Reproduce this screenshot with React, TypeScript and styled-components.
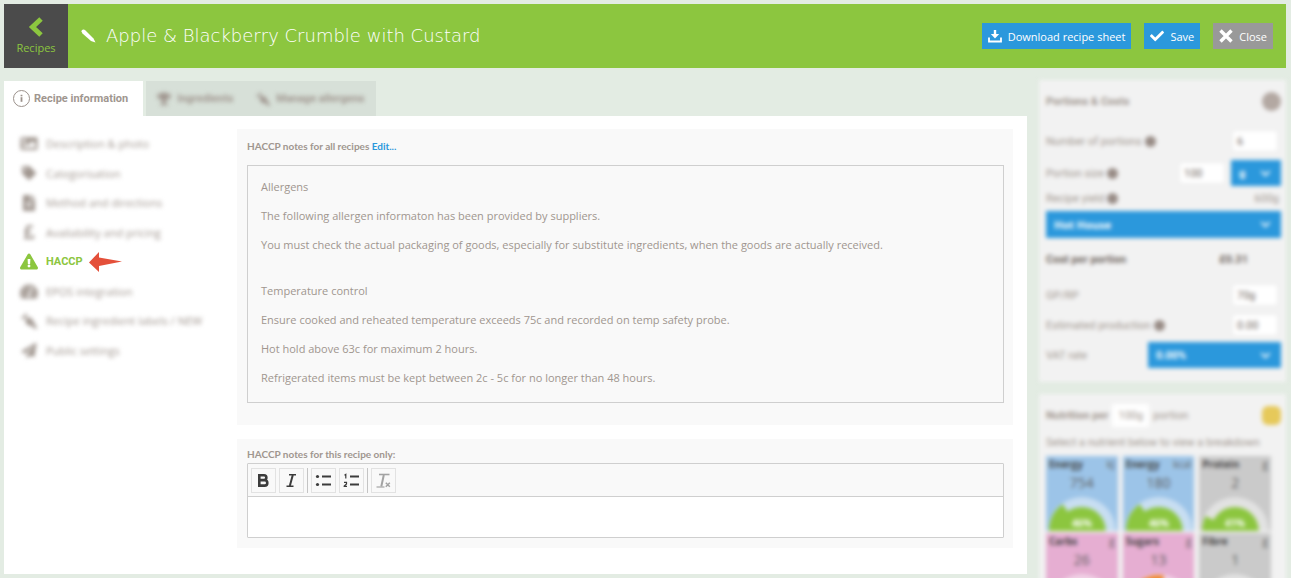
import React from 'react';
import styled, { createGlobalStyle, css } from 'styled-components';
import {
  FaCarrot,
  FaCheck,
  FaChevronDown,
  FaExclamationTriangle,
  FaFileAlt,
  FaImage,
  FaPaperPlane,
  FaPoundSign,
  FaTachometerAlt,
  FaTag,
  FaTrophy,
} from 'react-icons/fa';

const color = {
  page: '#e3ece3',
  green: '#8cc63f',
  dark: '#4b4b4b',
  blue: '#2b98dc',
  grey: '#999999',
  text: '#a0968f',
  card: '#f9f9f9',
  side: '#f2f2f2',
  line: '#cfcfcf',
};

const GlobalStyle = createGlobalStyle`
  *, *::before, *::after { box-sizing: border-box; }
  body {
    margin: 0;
    background: ${color.page};
    color: ${color.text};
    font-family: 'Open Sans', 'Liberation Sans', sans-serif;
    font-size: 11px;
    line-height: 17px;
  }
  button, input, select, textarea { font: inherit; color: inherit; margin: 0; }
  p, h1, h2, ul { margin: 0; padding: 0; font: inherit; }
`;

const Page = styled.div`
  display: flex;
  flex-direction: column;
  gap: 12px;
  height: 100vh;
  padding: 4px 5px 4px 4px;
  overflow: hidden;
`;

const Header = styled.header`
  display: flex;
  align-items: center;
  flex: none;
  height: 64px;
  background: ${color.green};
`;

const BackLink = styled.a`
  display: flex;
  flex-direction: column;
  align-items: center;
  justify-content: center;
  gap: 2px;
  width: 64px;
  height: 64px;
  background: ${color.dark};
  color: ${color.green};
  text-decoration: none;
`;

const Title = styled.h1`
  display: flex;
  align-items: center;
  gap: 10px;
  flex: 1;
  padding-left: 13px;
  color: #fff;
  font-family: 'DejaVu Sans', sans-serif;
  font-size: 18px;
  font-weight: 200;
  line-height: 24px;
  white-space: nowrap;
`;

const Actions = styled.div`
  display: flex;
  gap: 13px;
  padding-right: 13px;
`;

const ActionButton = styled.button<{ $muted?: boolean }>`
  display: flex;
  align-items: center;
  gap: 6px;
  height: 26px;
  padding: 0 6px;
  border: 0;
  background: ${(p) => (p.$muted ? color.grey : color.blue)};
  color: #fff;
  white-space: nowrap;
`;

const Columns = styled.div`
  display: flex;
  gap: 12px;
  flex: 1;
  min-height: 0;
`;

const Main = styled.main`
  display: flex;
  flex-direction: column;
  flex: 1;
  min-width: 0;
`;

const blurred = css`
  filter: blur(2px);
`;

const Tabs = styled.div`
  display: flex;
  height: 36px;
  padding-top: 1px;
`;

const Tab = styled.button<{ $active?: boolean }>`
  display: flex;
  align-items: center;
  gap: 4px;
  height: 35px;
  padding: ${(p) => (p.$active ? '0 15px 0 9px' : '0 12px 0 11px')};
  margin-right: ${(p) => (p.$active ? '3px' : '0')};
  border: 0;
  background: ${(p) => (p.$active ? '#fff' : '#d7e0d8')};
  font-family: Roboto, sans-serif;
  font-weight: bold;
  white-space: nowrap;
`;

const TabContent = styled.span`
  display: flex;
  align-items: center;
  gap: 6px;
  ${blurred}
`;

const Panel = styled.section`
  display: flex;
  align-items: flex-start;
  flex: 1;
  padding: 13px 14px 13px 0;
  background: #fff;
`;

const Menu = styled.ul`
  display: flex;
  flex-direction: column;
  flex: none;
  width: 233px;
  height: 236px;
  padding-left: 16px;
  list-style: none;
`;

const MenuItem = styled.li`
  display: flex;
  align-items: center;
  gap: 6px;
  flex: 1;
`;

const MenuLink = styled.a<{ $active?: boolean }>`
  display: flex;
  align-items: center;
  gap: 8px;
  color: ${(p) => (p.$active ? color.green : color.text)};
  font-family: ${(p) => (p.$active ? 'Roboto, sans-serif' : 'inherit')};
  font-weight: ${(p) => (p.$active ? 'bold' : 'normal')};
  text-decoration: none;
  white-space: nowrap;
  ${(p) => !p.$active && blurred}
  svg { width: 18px; }
`;

const Notes = styled.div`
  display: flex;
  flex-direction: column;
  gap: 14px;
  flex: 1;
  min-width: 0;
`;

const NoteCard = styled.section<{ $compact?: boolean }>`
  padding: ${(p) => (p.$compact ? '8px 9px 10px 10px' : '10px 9px 22px 10px')};
  background: ${color.card};
`;

const NoteLabel = styled.label<{ $gap: number }>`
  display: block;
  margin-bottom: ${(p) => p.$gap}px;
  font-family: Lato, sans-serif;
  font-size: 10px;
  font-weight: bold;
  line-height: 14px;
`;

const EditLink = styled.a`
  color: ${color.blue};
  text-decoration: none;
`;

const NoteBody = styled.div`
  display: flex;
  flex-direction: column;
  gap: 12px;
  padding: 12px 13px 16px;
  border: 1px solid ${color.line};
`;

const NoteGroup = styled.div`
  display: flex;
  flex-direction: column;
  gap: 12px;
  & + & { margin-top: 17px; }
`;

const Editor = styled.div`
  border: 1px solid ${color.line};
  border-radius: 1px;
`;

const Toolbar = styled.div`
  display: flex;
  align-items: center;
  gap: 3px;
  height: 33px;
  padding: 0 3px;
  border-bottom: 1px solid ${color.line};
`;

const ToolButton = styled.button`
  display: flex;
  align-items: center;
  justify-content: center;
  width: 25px;
  height: 25px;
  padding: 0;
  border: 1px solid #e2e2e2;
  background: ${color.card};
  color: #3c3c3c;
`;

const Divider = styled.span`
  width: 1px;
  height: 25px;
  background: #c4c4c4;
`;

const TextArea = styled.textarea`
  display: block;
  width: 100%;
  height: 40px;
  padding: 8px;
  border: 0;
  outline: 0;
  background: #fff;
  resize: none;
`;

const Sidebar = styled.aside`
  display: flex;
  flex-direction: column;
  gap: 12px;
  flex: none;
  width: 247px;
  ${blurred}
`;

const SideCard = styled.section`
  flex: none;
  padding: 0 5px 12px 7px;
  background: ${color.side};
`;

const SideTitle = styled.h2`
  display: flex;
  align-items: center;
  gap: 4px;
  height: 42px;
  font-family: Roboto, sans-serif;
  font-weight: bold;
`;

const Round = styled.span<{ $tone?: string }>`
  width: 19px;
  height: 19px;
  margin-left: auto;
  border-radius: ${(p) => (p.$tone ? '6px' : '50%')};
  background: ${(p) => p.$tone ?? '#b3a8a2'};
`;

const Row = styled.div<{ $height: number; $strong?: boolean }>`
  display: flex;
  align-items: center;
  gap: 6px;
  height: ${(p) => p.$height}px;
  font-family: Roboto, sans-serif;
  font-weight: ${(p) => (p.$strong ? 'bold' : 'normal')};
  color: ${(p) => (p.$strong ? '#6f6660' : color.text)};
`;

const RowLabel = styled.label`
  display: flex;
  align-items: center;
  gap: 3px;
  flex: 1;
  white-space: nowrap;
`;

const Help = styled.i`
  width: 11px;
  height: 11px;
  border-radius: 50%;
  background: #988c86;
`;

const Field = styled.input`
  width: 46px;
  height: 22px;
  padding: 0 4px;
  border: 1px solid #ececec;
  background: #fff;
  color: #6f6660;
`;

const FieldEnd = styled.div`
  padding-right: 3px;
`;

const SelectBox = styled.div<{ $width: string; $height: number }>`
  display: grid;
  align-items: center;
  width: ${(p) => p.$width};
  height: ${(p) => p.$height}px;
  background: ${color.blue};
  color: #fff;
  font-weight: bold;
  > * { grid-area: 1 / 1; }
  > svg { justify-self: end; margin-right: 10px; pointer-events: none; }
`;

const Select = styled.select`
  width: 100%;
  height: 100%;
  padding: 0 8px;
  border: 0;
  background: transparent;
  appearance: none;
`;

const RowValue = styled.span<{ $inset?: boolean }>`
  padding-right: ${(p) => (p.$inset ? '33px' : '2px')};
`;

const Portion = styled.span`
  padding: 3px 6px;
  background: #fff;
  font-weight: normal;
`;

const Light = styled.span`
  font-weight: normal;
`;

const Hint = styled.p`
  height: 20px;
  font-family: Roboto, sans-serif;
  line-height: 14px;
  white-space: nowrap;
`;

const Tiles = styled.div`
  display: grid;
  grid-template-columns: repeat(3, 1fr);
  gap: 2px 5px;
  padding-right: 10px;
`;

const Tile = styled.div<{ $tone: string }>`
  display: flex;
  flex-direction: column;
  height: 75px;
  background: ${(p) => p.$tone};
  color: #5c5c5c;
`;

const TileHead = styled.div`
  display: flex;
  justify-content: space-between;
  padding: 0 3px;
  font-size: 10px;
  b { color: #444; }
`;

const TileValue = styled.span`
  margin-bottom: auto;
  font-size: 14px;
  line-height: 20px;
  text-align: center;
`;

const ChevronIcon = () => (
  <svg width="16" height="20" viewBox="0 0 16 20" fill="none" stroke="currentColor" strokeWidth="5">
    <path d="M13 2 L4.500 10 L13 18" />
  </svg>
);

const PencilIcon = () => (
  <svg width="15" height="14" viewBox="0 0 15 14" fill="#fff">
    <path d="M0.500 2.500 Q0.300 0.300 3 0.500 L4.500 1.500 L12.500 9.500 L14.500 13.500 L10 12 L1.500 4.500 Z" />
  </svg>
);

const DownloadIcon = () => (
  <svg width="14" height="14" viewBox="0 0 14 14" fill="none" stroke="currentColor">
    <path d="M7 1v5" strokeWidth="2.400" />
    <path d="M2.800 5h8.400L7 9.600z" fill="currentColor" stroke="none" />
    <path d="M1 8.500V12.500H13V8.500" strokeWidth="1.800" />
  </svg>
);

const CrossIcon = () => (
  <svg width="14" height="14" viewBox="0 0 14 14" stroke="currentColor" strokeWidth="3.400">
    <path d="M1.500 1.500 L12.500 12.500 M12.500 1.500 L1.500 12.500" />
  </svg>
);

const InfoIcon = () => (
  <svg width="17" height="17" viewBox="0 0 17 17" fill="none" stroke="#9b918b">
    <circle cx="8.500" cy="8.500" r="8" />
    <path d="M8.500 7.200v4.600" strokeWidth="1.800" />
    <path d="M8.500 4.800v1.500" strokeWidth="1.800" />
  </svg>
);

const ArrowIcon = () => (
  <svg width="33" height="20" viewBox="0 0 33 20" fill="#e4503a">
    <path d="M0 10.500 L10 0 V5.500 L33 9.500 L10 14 V20 Z" />
  </svg>
);

const BoldIcon = () => (
  <svg width="17" height="17" viewBox="0 0 17 17" fill="none" stroke="currentColor" strokeWidth="2.600">
    <path d="M4.500 3.300H9a2.300 2.300 0 0 1 0 4.700H4.500M4.500 8.200H9.600a2.700 2.700 0 0 1 0 5.400H4.500M4.300 2v12.900" />
  </svg>
);

const ItalicIcon = () => (
  <svg width="17" height="17" viewBox="0 0 17 17" fill="none" stroke="currentColor" strokeWidth="1.400">
    <path d="M6 2.700h7M3.500 14.300h7" />
    <path d="M9.800 3L6.800 14" strokeWidth="2" />
  </svg>
);

const ListIcon = ({ numbered }: { numbered?: boolean }) => (
  <svg width="17" height="17" viewBox="0 0 17 17" fill="none" stroke="currentColor">
    <path d="M7 4.500h9M7 12.500h9" strokeWidth="1.800" />
    {numbered ? (
      <path d="M1.500 3.200L2.800 2.300V6.600M1 10.300h2.500v1.600L1.200 14v0.400h2.800" strokeWidth="1.200" />
    ) : (
      <g fill="currentColor" stroke="none">
        <circle cx="2.500" cy="4.500" r="1.600" />
        <circle cx="2.500" cy="12.500" r="1.600" />
      </g>
    )}
  </svg>
);

const ClearIcon = () => (
  <svg width="17" height="17" viewBox="0 0 17 17" fill="none" stroke="#a3a3a3">
    <path d="M4 2.500h10.500" strokeWidth="1.600" />
    <path d="M8.800 3L6.300 14.500" strokeWidth="2" />
    <path d="M1.500 15h8" strokeWidth="1.200" />
    <path d="M10.800 10.800l4 4M14.800 10.800l-4 4" strokeWidth="1.500" />
  </svg>
);

const AllergenIcon = styled(FaCarrot)`
  transform: scaleX(-1);
`;

const Gauge = ({ label, fill, tone }: { label?: string; fill: number; tone: string }) => {
  const angle = Math.PI * (1 - fill);
  const x = 36 + 33 * Math.cos(angle);
  const y = 35 - 33 * Math.sin(angle);
  return (
    <svg width="100%" height="35" viewBox="0 0 72 35">
      <path d="M2 35a34 34 0 0 1 68 0z" fill="#fff" fillOpacity="0.450" />
      <path d={`M36 35H3A33 33 0 0 1 ${x} ${y}z`} fill={tone} />
      <path d="M12 35a24 24 0 0 1 48 0z" fill={tone} />
      {label && (
        <text x="36" y="31" fill="#fff" fontSize="10" fontWeight="bold" textAnchor="middle">
          {label}
        </text>
      )}
    </svg>
  );
};

const menu = [
  { label: 'Description & photo', icon: <FaImage size={17} /> },
  { label: 'Categorisation', icon: <FaTag size={14} /> },
  { label: 'Method and directions', icon: <FaFileAlt size={16} /> },
  { label: 'Availability and pricing', icon: <FaPoundSign size={16} /> },
  { label: 'HACCP', icon: <FaExclamationTriangle size={17} />, active: true },
  { label: 'EPOS integration', icon: <FaTachometerAlt size={17} /> },
  { label: 'Recipe ingredient labels / NEW', icon: <AllergenIcon size={16} /> },
  { label: 'Public settings', icon: <FaPaperPlane size={15} /> },
];

const sharedNotes = [
  [
    'Allergens',
    'The following allergen informaton has been provided by suppliers.',
    'You must check the actual packaging of goods, especially for substitute ingredients, when the goods are actually received.',
  ],
  [
    'Temperature control',
    'Ensure cooked and reheated temperature exceeds 75c and recorded on temp safety probe.',
    'Hot hold above 63c for maximum 2 hours.',
    'Refrigerated items must be kept between 2c - 5c for no longer than 48 hours.',
  ],
];

const tiles = [
  { name: 'Energy', unit: 'kJ', value: '754', label: '46%', fill: 0.3, tone: '#9cc4e8', gauge: color.green },
  { name: 'Energy', unit: 'kcal', value: '180', label: '46%', fill: 0.3, tone: '#9cc4e8', gauge: color.green },
  { name: 'Protein', unit: 'g', value: '2', label: '41%', fill: 0.15, tone: '#cacaca', gauge: color.green },
  { name: 'Carbs', unit: 'g', value: '26', fill: 0.1, tone: '#e6aed2', gauge: color.green },
  { name: 'Sugars', unit: 'g', value: '13', fill: 0.55, tone: '#e6aed2', gauge: '#f08a2c' },
  { name: 'Fibre', unit: 'g', value: '1', fill: 0.05, tone: '#cacaca', gauge: color.green },
];

export default function App() {
  return (
    <Page>
      <GlobalStyle />
      <Header>
        <BackLink href="#recipes">
          <ChevronIcon />
          Recipes
        </BackLink>
        <Title>
          <PencilIcon />
          Apple &amp; Blackberry Crumble with Custard
        </Title>
        <Actions>
          <ActionButton>
            <DownloadIcon />
            Download recipe sheet
          </ActionButton>
          <ActionButton>
            <FaCheck size={14} />
            Save
          </ActionButton>
          <ActionButton $muted>
            <CrossIcon />
            Close
          </ActionButton>
        </Actions>
      </Header>

      <Columns>
        <Main>
          <Tabs>
            <Tab $active>
              <InfoIcon />
              Recipe information
            </Tab>
            <Tab>
              <TabContent>
                <FaTrophy size={14} />
                Ingredients
              </TabContent>
            </Tab>
            <Tab>
              <TabContent>
                <AllergenIcon size={14} />
                Manage allergens
              </TabContent>
            </Tab>
          </Tabs>
          <Panel>
            <Menu>
              {menu.map((item) => (
                <MenuItem key={item.label}>
                  <MenuLink href="#section" $active={item.active}>
                    {item.icon}
                    {item.label}
                  </MenuLink>
                  {item.active && <ArrowIcon />}
                </MenuItem>
              ))}
            </Menu>
            <Notes>
              <NoteCard>
                <NoteLabel as="p" $gap={12}>
                  HACCP notes for all recipes <EditLink href="#edit">Edit...</EditLink>
                </NoteLabel>
                <NoteBody>
                  {sharedNotes.map((group) => (
                    <NoteGroup key={group[0]}>
                      {group.map((line) => (
                        <p key={line}>{line}</p>
                      ))}
                    </NoteGroup>
                  ))}
                </NoteBody>
              </NoteCard>
              <NoteCard $compact>
                <NoteLabel htmlFor="recipe-notes" $gap={2}>
                  HACCP notes for this recipe only:
                </NoteLabel>
                <Editor>
                  <Toolbar>
                    <ToolButton aria-label="Bold"><BoldIcon /></ToolButton>
                    <ToolButton aria-label="Italic"><ItalicIcon /></ToolButton>
                    <Divider />
                    <ToolButton aria-label="Bulleted list"><ListIcon /></ToolButton>
                    <ToolButton aria-label="Numbered list"><ListIcon numbered /></ToolButton>
                    <Divider />
                    <ToolButton aria-label="Remove format"><ClearIcon /></ToolButton>
                  </Toolbar>
                  <TextArea id="recipe-notes" />
                </Editor>
              </NoteCard>
            </Notes>
          </Panel>
        </Main>

        <Sidebar>
          <SideCard>
            <SideTitle>
              Portions &amp; Costs
              <Round />
            </SideTitle>
            <Row $height={38}>
              <RowLabel htmlFor="portions">Number of portions <Help /></RowLabel>
              <FieldEnd><Field id="portions" defaultValue="6" /></FieldEnd>
            </Row>
            <Row $height={26}>
              <RowLabel htmlFor="size">Portion size <Help /></RowLabel>
              <Field id="size" defaultValue="100" />
              <SelectBox $width="50px" $height={26}>
                <Select aria-label="Unit" defaultValue="g"><option>g</option></Select>
                <FaChevronDown size={11} />
              </SelectBox>
            </Row>
            <Row $height={25}>
              <RowLabel as="span">Recipe yield <Help /></RowLabel>
              <RowValue>600g</RowValue>
            </Row>
            <SelectBox $width="100%" $height={27}>
              <Select aria-label="Price band" defaultValue="Hot House"><option>Hot House</option></Select>
              <FaChevronDown size={11} />
            </SelectBox>
            <Row $height={42} $strong>
              <RowLabel as="span">Cost per portion</RowLabel>
              <RowValue $inset>£0.31</RowValue>
            </Row>
            <Row $height={30}>
              <RowLabel htmlFor="gp">GP/RP</RowLabel>
              <FieldEnd><Field id="gp" defaultValue="70g" /></FieldEnd>
            </Row>
            <Row $height={30}>
              <RowLabel htmlFor="cost">Estimated production <Help /></RowLabel>
              <FieldEnd><Field id="cost" defaultValue="0.00" /></FieldEnd>
            </Row>
            <Row $height={30}>
              <RowLabel htmlFor="vat">VAT rate</RowLabel>
              <SelectBox $width="133px" $height={26}>
                <Select id="vat" defaultValue="0.00%"><option>0.00%</option></Select>
                <FaChevronDown size={11} />
              </SelectBox>
            </Row>
          </SideCard>
          <SideCard>
            <SideTitle>
              Nutrition per <Portion>100g</Portion> <Light>portion</Light>
              <Round $tone="#e6c95a" />
            </SideTitle>
            <Hint>Select a nutrient below to view a breakdown</Hint>
            <Tiles>
              {tiles.map((tile) => (
                <Tile key={tile.name + tile.unit} $tone={tile.tone}>
                  <TileHead>
                    <b>{tile.name}</b>
                    <span>{tile.unit}</span>
                  </TileHead>
                  <TileValue>{tile.value}</TileValue>
                  <Gauge label={tile.label} fill={tile.fill} tone={tile.gauge} />
                </Tile>
              ))}
            </Tiles>
          </SideCard>
        </Sidebar>
      </Columns>
    </Page>
  );
}
